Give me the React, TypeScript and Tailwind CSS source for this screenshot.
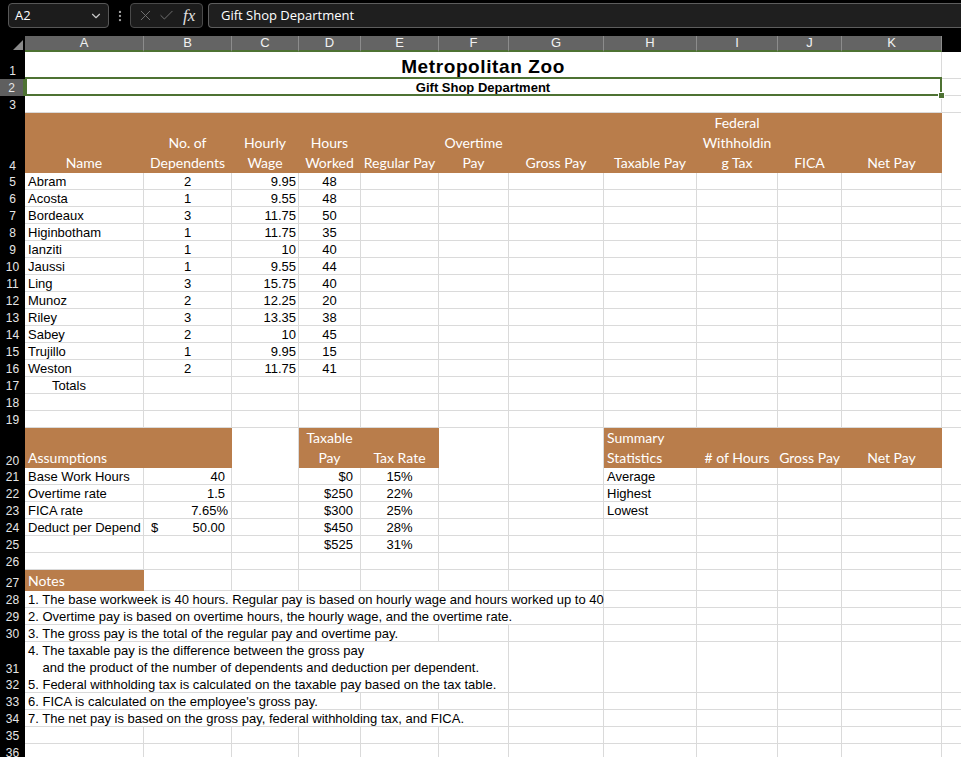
import type { ReactNode } from "react";
import { ChevronDown, X, Check, EllipsisVertical } from "lucide-react";

const COLS =
  "grid grid-cols-[25px_119px_88px_67px_62px_78px_70px_95px_93px_81px_64px_100px_1fr]";
const ARIAL = "font-['Liberation_Sans',Arial,sans-serif]";
const CAL = "font-['Lato',sans-serif]";
const BROWN = "bg-[#b97d4b] border-[#b97d4b]";

const SPAN: Record<number, string> = {
  1: "",
  2: "col-span-2",
  4: "col-span-4",
  5: "col-span-5",
  6: "col-span-6",
  7: "col-span-7",
  11: "col-span-11",
};

const ALIGN = {
  l: "justify-start text-left",
  c: "justify-center text-center",
  r: "justify-end text-right",
  b: "justify-between",
};

type CellProps = {
  span?: number;
  brown?: boolean;
  align?: "l" | "c" | "r" | "b";
  pad?: string;
  lead?: string;
  className?: string;
  children?: ReactNode;
};

function Cell({ span = 1, brown, align = "l", pad = "px-[3px]", lead, className = "", children }: CellProps) {
  const look = brown
    ? `${BROWN} ${CAL} text-[14px] ${lead ?? "leading-[20px]"} text-white`
    : `bg-white border-[#dadada] ${ARIAL} ${lead ?? "leading-[15px]"} text-black`;
  return (
    <div
      className={`${SPAN[span]} flex items-end whitespace-nowrap border-r border-b ${look} ${ALIGN[align]} ${pad} ${className}`}
    >
      {children}
    </div>
  );
}

function blanks(n: number) {
  return Array.from({ length: n }, (_, i) => <Cell key={`b${i}`} />);
}

function Row({ h, n, active, children }: { h: string; n: number; active?: boolean; children: ReactNode }) {
  return (
    <div className={`${COLS} ${h} text-[13px]`}>
      <div
        className={`flex items-end justify-center pb-[1px] ${ARIAL} text-[12px] leading-[14px] text-[#e6e6e6] ${
          active ? "bg-[#5f5f5f] border-r-2 border-[#4e7233]" : "bg-black"
        }`}
      >
        {n}
      </div>
      {children}
      <div className="border-b border-[#dadada] bg-white" />
    </div>
  );
}

const people: [string, number, string, number][] = [
  ["Abram", 2, "9.95", 48],
  ["Acosta", 1, "9.55", 48],
  ["Bordeaux", 3, "11.75", 50],
  ["Higinbotham", 1, "11.75", 35],
  ["Ianziti", 1, "10", 40],
  ["Jaussi", 1, "9.55", 44],
  ["Ling", 3, "15.75", 40],
  ["Munoz", 2, "12.25", 20],
  ["Riley", 3, "13.35", 38],
  ["Sabey", 2, "10", 45],
  ["Trujillo", 1, "9.95", 15],
  ["Weston", 2, "11.75", 41],
];

const headers: string[][] = [
  ["Name"],
  ["No. of", "Dependents"],
  ["Hourly", "Wage"],
  ["Hours", "Worked"],
  ["Regular Pay"],
  ["Overtime", "Pay"],
  ["Gross Pay"],
  ["Taxable Pay"],
  ["Federal", "Withholdin", "g Tax"],
  ["FICA"],
  ["Net Pay"],
];

const side = [
  { label: "Base Work Hours", val: "40", pay: "$0", rate: "15%", stat: "Average" },
  { label: "Overtime rate", val: "1.5", pay: "$250", rate: "22%", stat: "Highest" },
  { label: "FICA rate", val: "7.65%", pay: "$300", rate: "25%", stat: "Lowest" },
  { label: "Deduct per Depend", val: "50.00", pay: "$450", rate: "28%", stat: "" },
  { label: "", val: "", pay: "$525", rate: "31%", stat: "" },
];

const notes: [number, number, string][] = [
  [28, 7, "1. The base workweek is 40 hours. Regular pay is based on hourly wage and hours worked up to 40"],
  [29, 7, "2. Overtime pay is based on overtime hours, the hourly wage, and the overtime rate."],
  [30, 5, "3. The gross pay is the total of the regular pay and overtime pay."],
];

const notes2: [number, number, string][] = [
  [32, 6, "5. Federal withholding tax is calculated on the taxable pay based on the tax table."],
  [33, 4, "6. FICA is calculated on the employee's gross pay."],
  [34, 6, "7. The net pay is based on the gross pay, federal withholding tax, and FICA."],
];

function TopBar() {
  return (
    <div className="flex h-[36px] items-start bg-black pl-[8px] pt-[3px] font-['Open_Sans',sans-serif]">
      <div className="flex h-[25px] w-[101px] items-center justify-between rounded-[4px] border border-[#575757] bg-[#1c1c1c] pl-[6px] pr-[5px]">
        <span className="text-[13px] text-white">A2</span>
        <ChevronDown size={14} className="text-[#c8c8c8]" />
      </div>
      <div className="flex h-[25px] w-[21px] items-center justify-center">
        <EllipsisVertical size={14} className="text-[#a0a0a0]" />
      </div>
      <div className="flex h-[25px] w-[73px] items-center gap-[4px] rounded-[4px] border border-[#4a4a4a] bg-[#1c1c1c] pl-[6px]">
        <X size={17} strokeWidth={1.3} className="text-[#767676]" />
        <Check size={17} strokeWidth={1.3} className="text-[#767676]" />
        <span className="ml-[4px] font-['Liberation_Serif',serif] text-[17px] italic text-[#e0e0e0]">fx</span>
      </div>
      <div className="ml-[5px] flex h-[25px] flex-1 items-center rounded-l-[4px] border-y border-l border-[#5e5e5e] bg-[#1f1f1f] pl-[12px]">
        <span className="text-[13px] text-white">Gift Shop Department</span>
      </div>
    </div>
  );
}

function ColumnHeads() {
  return (
    <div className={`${COLS} h-[16px]`}>
      <div className="relative bg-black">
        <svg width="25" height="16" className="absolute inset-0">
          <polygon points="23,4 23,14 13,14" fill="#8a8a8a" />
        </svg>
      </div>
      {["A", "B", "C", "D", "E", "F", "G", "H", "I", "J", "K"].map((l) => (
        <div
          key={l}
          className={`flex items-center justify-center border-r border-b-2 border-r-[#8c8c8c] border-b-[#4e7233] bg-[#646464] ${ARIAL} text-[13px] leading-[14px] text-[#f2f2f2]`}
        >
          {l}
        </div>
      ))}
      <div className="bg-black" />
    </div>
  );
}

export default function App() {
  return (
    <div className="h-[757px] w-[961px] overflow-hidden bg-black">
      <TopBar />
      <ColumnHeads />

      <Row h="h-[27px]" n={1}>
        <Cell
          span={11}
          align="c"
          lead="leading-[22px]"
          className="items-center pt-[1px] text-[19px] font-bold tracking-[0.6px] text-[#33200f]"
        >
          Metropolitan Zoo
        </Cell>
      </Row>
      <Row h="h-[17px]" n={2} active>
        <Cell span={11} align="c" className="relative items-center font-bold text-[#3a2a1a]">
          Gift Shop Department
          <div className="pointer-events-none absolute -top-[2px] left-0 -right-[1px] -bottom-[1px] border-2 border-[#4e7233]" />
          <div className="absolute -bottom-[4px] -right-[4px] h-[7px] w-[7px] border border-white bg-[#4e7233]" />
        </Cell>
      </Row>
      <Row h="h-[17px]" n={3}>
        <Cell span={11} />
      </Row>

      <Row h="h-[60px]" n={4}>
        {headers.map((lines, i) => (
          <Cell key={i} brown align="c">
            <div>
              {lines.map((t) => (
                <div key={t}>{t}</div>
              ))}
            </div>
          </Cell>
        ))}
      </Row>

      {people.map(([name, dep, wage, hours], i) => (
        <Row key={name} h="h-[17px]" n={5 + i}>
          <Cell>{name}</Cell>
          <Cell align="c">{dep}</Cell>
          <Cell align="r" pad="pr-[2px]">{wage}</Cell>
          <Cell align="c">{hours}</Cell>
          {blanks(7)}
        </Row>
      ))}

      <Row h="h-[17px]" n={17}>
        <Cell pad="pl-[27px]">Totals</Cell>
        {blanks(10)}
      </Row>
      <Row h="h-[17px]" n={18}>{blanks(11)}</Row>
      <Row h="h-[17px]" n={19}>{blanks(11)}</Row>

      <Row h="h-[40px]" n={20}>
        <Cell span={2} brown>Assumptions</Cell>
        <Cell />
        <Cell brown align="c">
          <div>
            <div>Taxable</div>
            <div>Pay</div>
          </div>
        </Cell>
        <Cell brown align="c">Tax Rate</Cell>
        <Cell />
        <Cell />
        <Cell brown>
          <div>
            <div>Summary</div>
            <div>Statistics</div>
          </div>
        </Cell>
        <Cell brown align="c"># of Hours</Cell>
        <Cell brown align="c">Gross Pay</Cell>
        <Cell brown align="c">Net Pay</Cell>
      </Row>

      {side.map((s, i) => (
        <Row key={i} h="h-[17px]" n={21 + i}>
          <Cell>{s.label}</Cell>
          {s.val === "50.00" ? (
            <Cell align="b" pad="pl-[7px] pr-[6px]">
              <span>$</span>
              <span>50.00</span>
            </Cell>
          ) : (
            <Cell align="r" pad={s.val.endsWith("%") ? "pr-[3px]" : "pr-[6px]"}>
              {s.val}
            </Cell>
          )}
          <Cell />
          <Cell align="r" pad="pr-[7px]">{s.pay}</Cell>
          <Cell align="c">{s.rate}</Cell>
          <Cell />
          <Cell />
          <Cell>{s.stat}</Cell>
          {blanks(3)}
        </Row>
      ))}

      <Row h="h-[17px]" n={26}>{blanks(11)}</Row>
      <Row h="h-[21px]" n={27}>
        <Cell brown lead="leading-[19px]">Notes</Cell>
        {blanks(10)}
      </Row>

      {notes.map(([n, span, t]) => (
        <Row key={n} h="h-[17px]" n={n}>
          <Cell span={span}>{t}</Cell>
          {blanks(11 - span)}
        </Row>
      ))}
      <Row h="h-[34px]" n={31}>
        <Cell span={6} lead="leading-[17px]">
          <div className="whitespace-pre">
            <div>4. The taxable pay is the difference between the gross pay</div>
            <div>{"    and the product of the number of dependents and deduction per dependent."}</div>
          </div>
        </Cell>
        {blanks(5)}
      </Row>
      {notes2.map(([n, span, t]) => (
        <Row key={n} h="h-[17px]" n={n}>
          <Cell span={span}>{t}</Cell>
          {blanks(11 - span)}
        </Row>
      ))}
      <Row h="h-[17px]" n={35}>{blanks(11)}</Row>
      <Row h="h-[17px]" n={36}>{blanks(11)}</Row>
    </div>
  );
}
